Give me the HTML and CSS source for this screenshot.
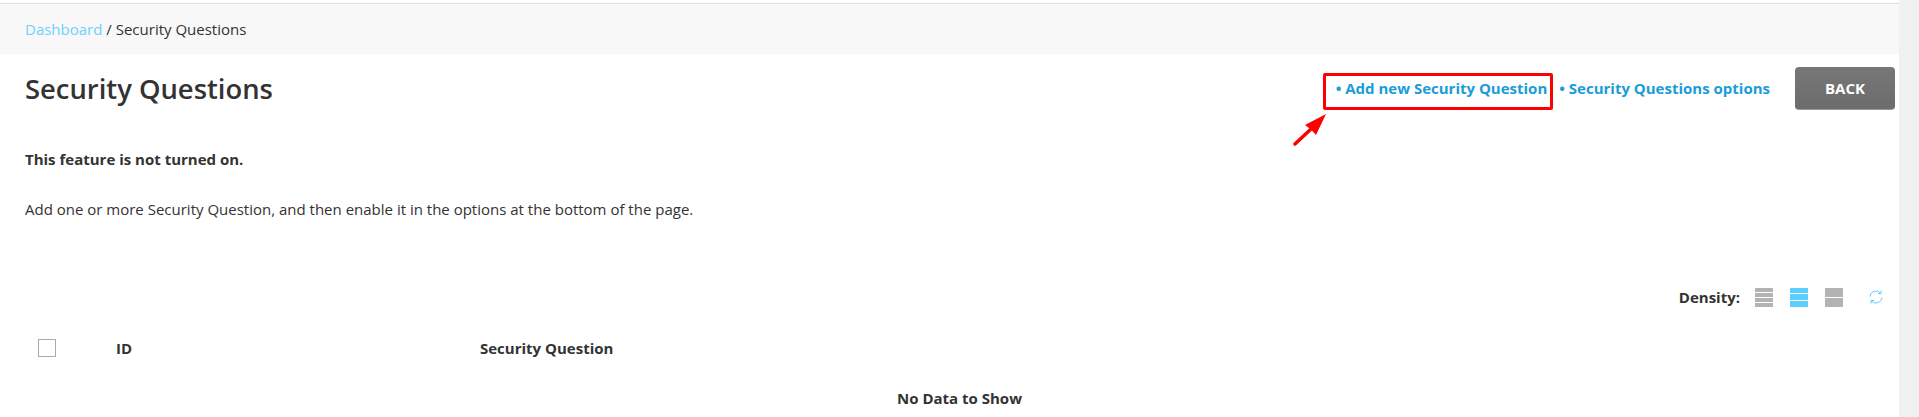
FILE: index.html
```html
<!DOCTYPE html>
<html>
	<head>
		<title>Security Questions</title>
		<link rel="stylesheet" href="styles.css">
	</head>
	<body>
		<div class="page">
			<div class="main">
				<div class="breadcrumb"><a class="crumbLink">Dashboard</a> / Security Questions</div>
				<div class="titleRow">
					<h1 class="title">Security Questions</h1>
					<div class="actions">
						<a class="action">• Add new Security Question</a>
						<a class="action">• Security Questions options</a>
						<div class="btnBack">BACK</div>
					</div>
				</div>
				<p class="notice">This feature is not turned on.</p>
				<p class="hint">Add one or more Security Question, and then enable it in the options at the bottom of the page.</p>
				<div class="densityRow">
					<span class="densityLabel">Density:</span>
					<div class="density">
						<i></i><i></i><i></i><i></i>
					</div>
					<div class="density selected">
						<i></i><i></i><i></i>
					</div>
					<div class="density">
						<i></i><i></i>
					</div>
					<svg class="refresh" width="14" height="16" viewBox="0 0 14 16" fill="none" stroke="#5ccfff" stroke-width="1">
						<path d="M1 7.500A6 6 0 0 1 11.500 4"/>
						<path d="M12 1.500V4.500H9"/>
						<path d="M13 8.500A6 6 0 0 1 2.500 12"/>
						<path d="M2 14.500V11.500H5"/>
					</svg>
				</div>
				<div class="tableHead">
					<div class="colCheck"><span class="checkbox"></span></div>
					<div class="colId">ID</div>
					<div class="colQuestion">Security Question</div>
				</div>
				<div class="noData">No Data to Show</div>
			</div>
			<div class="scrollbar"></div>
		</div>
		<!-- annotation drawn over the screenshot -->
		<div class="redBox"></div>
		<svg class="redArrow" width="40" height="40" viewBox="0 0 40 40">
			<path d="M2 33L18 18" stroke="#f00" stroke-width="3.500" stroke-linecap="round"/>
			<path d="M33 3L23 24L18 18.500L12 14Z" fill="#f00"/>
		</svg>
	</body>
</html>
```

FILE: styles.css
```css
html, body{
	margin:0;
	height:100%;
	overflow:hidden;
	background:#fff;
}

body{
	font-family:"Open Sans", sans-serif;
	font-size:15px;
	color:#333;
}

.page{
	display:flex;
	height:417px;
}

.main{
	flex:1;
	min-width:0;
	padding-top:3px;
}

.scrollbar{
	width:20px;
	background:#f1f1f1;
}

.breadcrumb{
	height:50px;
	line-height:50px;
	padding:0 25px;
	border-top:1px solid #e0e0e0;
	background:#f8f8f8;
}

.crumbLink{
	color:#6fd0ff;
}

.titleRow{
	display:flex;
	align-items:center;
	justify-content:space-between;
	height:68px;
	padding:0 4px 0 25px;
}

.title{
	margin:0;
	font-size:27.400px;
	font-weight:600;
	color:#333;
}

.actions{
	display:flex;
	align-items:center;
	gap:12px;
}

.action{
	font-weight:700;
	color:#1a9cd8;
}

.btnBack{
	width:100px;
	height:42px;
	line-height:42px;
	margin-left:13px;
	text-align:center;
	border-radius:4px;
	border-bottom:1px solid #999;
	background:linear-gradient(#777, #6c6c6c);
	color:#fff;
	font-weight:700;
}

.notice{
	margin:27px 0 0 25px;
	font-weight:700;
}

.hint{
	margin:30px 0 0 25px;
}

.densityRow{
	display:flex;
	align-items:center;
	justify-content:flex-end;
	margin-top:68px;
	padding-right:16px;
	height:20px;
}

.densityLabel{
	font-weight:700;
	margin-right:15px;
}

.density{
	display:flex;
	flex-direction:column;
	gap:1px;
	width:18px;
	height:19px;
	margin-right:17px;
}

.density i{
	flex:1;
	background:#b3b3b3;
}

.density.selected i{
	background:#5ccfff;
}

.refresh{
	margin-left:9px;
}

.tableHead{
	display:flex;
	align-items:center;
	margin-top:21px;
	height:40px;
	font-weight:700;
}

.colCheck{
	width:116px;
	padding-left:38px;
	box-sizing:border-box;
	display:flex;
	flex:none;
}

.checkbox{
	width:16px;
	height:16px;
	border:1px solid #aaa;
}

.colId{
	width:364px;
	flex:none;
}

.noData{
	text-align:center;
	font-weight:700;
	margin-top:20px;
	padding-left:20px;
}

.redBox{
	position:absolute;
	left:1323px;
	top:73px;
	width:224px;
	height:31px;
	border:3px solid #f00;
	border-radius:2px;
}

.redArrow{
	position:absolute;
	left:1293px;
	top:111px;
}
```
